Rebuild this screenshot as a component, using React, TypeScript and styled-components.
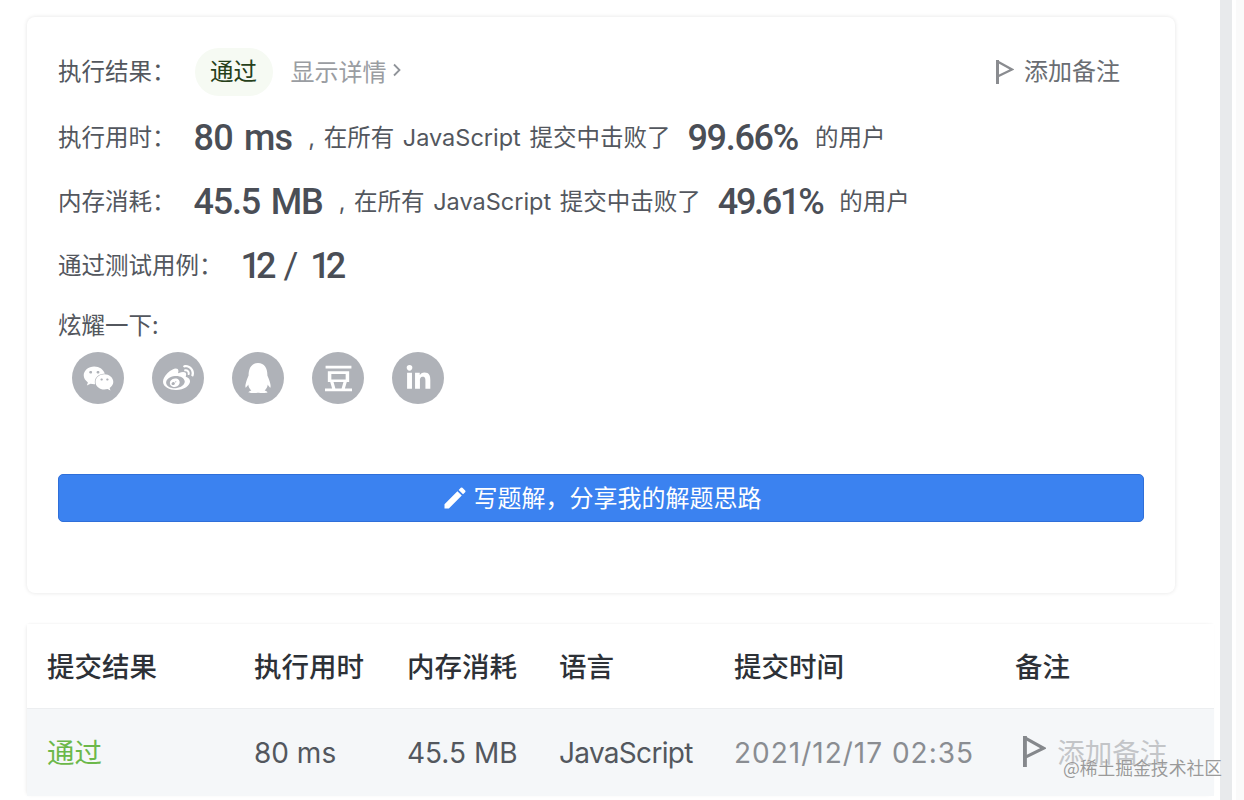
import React from "react";
import styled, { createGlobalStyle } from "styled-components";
import { FaWeixin, FaWeibo, FaQq, FaLinkedinIn } from "react-icons/fa";
import { SiDouban } from "react-icons/si";
import { MdEdit } from "react-icons/md";

const CJK = `"Noto Sans CJK SC", "Noto Sans", sans-serif`;
const COLUMNS = "207px 153px 152px 175px 281px 1fr";

const Global = createGlobalStyle`
  html, body {
    margin: 0;
    padding: 0;
    background: #fff;
    overflow: hidden;
    font-family: "Inter", ${CJK};
  }
`;

const Flag: React.FC<{ size: number; color: string }> = ({ size, color }) => (
  <svg width={size * 0.75} height={size} viewBox="0 0 18 24" fill="none">
    <path d="M1.5 1.5 16 9.5 1.5 16.5" stroke={color} strokeWidth="2.4" strokeLinejoin="miter" />
    <path d="M1.5 0v24" stroke={color} strokeWidth="3" />
  </svg>
);

export default function App() {
  return (
    <Page>
      <Global />
      <Main>
        <Card>
          <ResultRow>
            <ResultLabel>执行结果：</ResultLabel>
            <Badge>通过</Badge>
            <Details>
              显示详情
              <svg width="10" height="16" viewBox="0 0 10 16" fill="none">
                <path d="M2 2.5 7.5 8 2 13.5" stroke="#8f9399" strokeWidth="1.8" />
              </svg>
            </Details>
            <Note>
              <Flag size={24} color="#8a8c90" />
              <NoteText>添加备注</NoteText>
            </Note>
          </ResultRow>
          <StatRow>
            <Label>执行用时：</Label>
            <Big $spacing={-0.8}>80 ms</Big>
            <Sentence>, 在所有 JavaScript 提交中击败了</Sentence>
            <Percent $spacing={-1.3}>99.66%</Percent>
            <Tail>的用户</Tail>
          </StatRow>
          <StatRow>
            <Label>内存消耗：</Label>
            <Big $spacing={-1.2}>45.5 MB</Big>
            <Sentence>, 在所有 JavaScript 提交中击败了</Sentence>
            <Percent $spacing={-2.3}>49.61%</Percent>
            <Tail>的用户</Tail>
          </StatRow>
          <StatRow>
            <Label>通过测试用例：</Label>
            <Cases>
              <span>12</span>
              <Slash>/</Slash>
              <span>12</span>
            </Cases>
          </StatRow>
          <ShareLabel>炫耀一下:</ShareLabel>
          <Shares>
            <Share><FaWeixin size={31} /></Share>
            <Share><FaWeibo size={31} /></Share>
            <Share><FaQq size={30} /></Share>
            <Share><SiDouban size={27} /></Share>
            <Share><FaLinkedinIn size={27} /></Share>
          </Shares>
          <WriteButton>
            <MdEdit size={28} />
            <ButtonText>写题解，分享我的解题思路</ButtonText>
          </WriteButton>
        </Card>

        <Table>
          <HeadRow>
            <span>提交结果</span>
            <span>执行用时</span>
            <span>内存消耗</span>
            <span>语言</span>
            <span>提交时间</span>
            <span>备注</span>
          </HeadRow>
          <BodyRow>
            <Passed>通过</Passed>
            <span>80 ms</span>
            <span>45.5 MB</span>
            <Language>JavaScript</Language>
            <Time>2021/12/17 02:35</Time>
            <RowNote>
              <Flag size={31} color="#85888c" />
              添加备注
            </RowNote>
          </BodyRow>
          <Watermark>@稀土掘金技术社区</Watermark>
        </Table>
      </Main>
      <Rail />
      <Edge />
    </Page>
  );
}

const Page = styled.div`
  display: flex;
  width: 1244px;
  height: 800px;
  overflow: hidden;
  background: #fff;
`;

const Main = styled.main`
  width: 1187px;
  margin-left: 27px;
  padding-top: 17px;
  margin-right: 6px;
  flex: none;
`;

const Rail = styled.div`
  width: 12px;
  flex: none;
  background: #e8eaec;
`;

const Edge = styled.div`
  flex: 1;
  margin-left: 4px;
  background: #fafafa;
`;

const Card = styled.section`
  box-sizing: border-box;
  width: 1148px;
  height: 576px;
  padding: 31px 31px 0 31px;
  border-radius: 8px;
  background: #fff;
  box-shadow: 0 0 4px rgba(0, 0, 0, 0.11);
  color: #53575e;
`;

const Label = styled.span`
  font-family: ${CJK};
  font-size: 23.5px;
  color: #53575e;
  white-space: nowrap;
`;

const ResultRow = styled.div`
  display: flex;
  align-items: center;
  height: 48px;
`;

const ResultLabel = styled(Label)`
  padding-bottom: 4px;
`;

const Badge = styled.span`
  display: flex;
  align-items: center;
  justify-content: center;
  box-sizing: border-box;
  width: 78px;
  height: 48px;
  margin-left: 19px;
  padding-bottom: 4px;
  border-radius: 24px;
  background: #f6faf3;
  font-family: ${CJK};
  font-size: 23.5px;
  color: #26401a;
`;

const Details = styled.span`
  display: flex;
  align-items: center;
  gap: 5px;
  margin-left: 18px;
  padding-bottom: 4px;
  font-family: ${CJK};
  font-size: 24px;
  color: #9a9da2;
`;

const Note = styled.span`
  display: flex;
  align-items: center;
  gap: 10px;
  margin-left: auto;
  margin-right: 24px;
  font-family: ${CJK};
  font-size: 24px;
  color: #6a6d72;
`;

const NoteText = styled.span`
  padding-bottom: 6px;
`;

const StatRow = styled.div`
  display: flex;
  align-items: center;
  height: 64px;
  margin-top: 8px;

  & + & {
    margin-top: 0;
  }
`;

const Big = styled.span<{ $spacing: number }>`
  margin-left: 18px;
  padding-top: 4px;
  font-family: "Roboto", sans-serif;
  font-size: 36px;
  font-weight: 500;
  letter-spacing: ${({ $spacing }) => $spacing}px;
  word-spacing: 3px;
  color: #4a4e56;
  white-space: nowrap;
`;

const Sentence = styled.span`
  margin-left: 16px;
  font-family: "Inter", ${CJK};
  font-size: 23.5px;
  word-spacing: 2px;
  color: #53575e;
  white-space: nowrap;
`;

const Percent = styled.span<{ $spacing: number }>`
  margin-left: 17px;
  padding-top: 4px;
  font-family: "Roboto", sans-serif;
  font-size: 36px;
  font-weight: 500;
  letter-spacing: ${({ $spacing }) => $spacing}px;
  color: #4a4e56;
`;

const Tail = styled.span`
  margin-left: 17px;
  font-family: ${CJK};
  font-size: 23.5px;
  color: #53575e;
`;

const Cases = styled.span`
  display: flex;
  gap: 12px;
  margin-left: 18px;
  padding-top: 4px;
  font-family: "Roboto", sans-serif;
  font-size: 36px;
  font-weight: 500;
  letter-spacing: -5px;
  color: #4a4e56;
`;

const Slash = styled.span`
  font-weight: 400;
  letter-spacing: 0;
`;

const ShareLabel = styled(Label)`
  display: block;
  height: 36px;
  line-height: 36px;
  margin-top: 10px;
`;

const Shares = styled.div`
  display: flex;
  gap: 28px;
  margin: 10px 0 0 14px;
`;

const Share = styled.span`
  display: flex;
  align-items: center;
  justify-content: center;
  width: 52px;
  height: 52px;
  border-radius: 50%;
  background: #afb2b8;
  color: #fff;
`;

const WriteButton = styled.button`
  display: flex;
  align-items: center;
  justify-content: center;
  gap: 5px;
  width: 100%;
  height: 48px;
  margin-top: 70px;
  padding: 0;
  border: 1px solid #2f6fd9;
  border-radius: 5px;
  background: #3b82f0;
  font-family: ${CJK};
  font-size: 24px;
  color: #fff;
`;

const ButtonText = styled.span`
  padding-bottom: 4px;
`;

const Table = styled.section`
  position: relative;
  width: 1187px;
  margin-top: 31px;
  background: #fff;
  box-shadow: -2px 0 4px -2px rgba(0, 0, 0, 0.1), 0 -1px 2px -1px rgba(0, 0, 0, 0.06);
`;

const HeadRow = styled.div`
  display: grid;
  grid-template-columns: ${COLUMNS};
  align-items: center;
  box-sizing: border-box;
  height: 85px;
  padding: 0 0 3px 20px;
  border-bottom: 1px solid #eceef0;
  font-family: ${CJK};
  font-size: 27.5px;
  font-weight: 500;
  color: #2d3137;
`;

const BodyRow = styled.div`
  display: grid;
  grid-template-columns: ${COLUMNS};
  align-items: center;
  height: 87px;
  padding-left: 20px;
  background: #f5f7f9;
  font-family: "Inter", ${CJK};
  font-size: 28px;
  color: #53575e;
  white-space: nowrap;
`;

const Passed = styled.span`
  padding-bottom: 3px;
  font-family: ${CJK};
  font-size: 27.5px;
  color: #6cb84a;
`;

const Language = styled.span`
  letter-spacing: -0.7px;
`;

const Time = styled.span`
  letter-spacing: 1px;
  color: #8a8d92;
`;

const RowNote = styled.span`
  display: flex;
  align-items: center;
  gap: 11px;
  margin-left: 8px;
  padding-bottom: 3px;
  font-family: ${CJK};
  font-size: 27.5px;
  color: #c3c5c8;
`;

const Watermark = styled.span`
  position: absolute;
  right: -8px;
  bottom: 16px;
  font-family: ${CJK};
  font-size: 17.8px;
  color: #9a9a9a;
  text-shadow: 0 0 1px #fff;
  white-space: nowrap;
`;
